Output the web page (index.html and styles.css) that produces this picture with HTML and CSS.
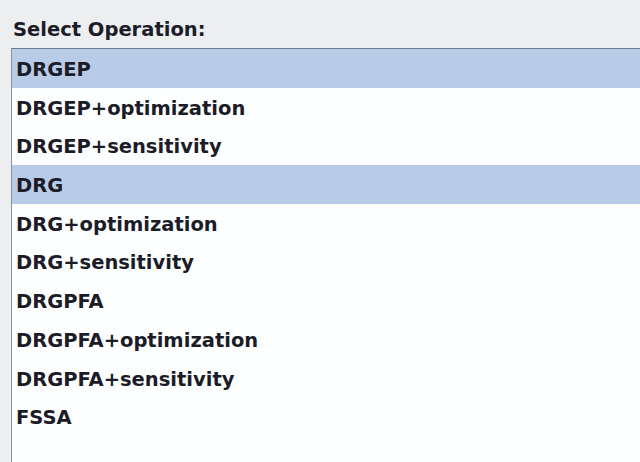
FILE: index.html
```html
<!DOCTYPE html>
<html>
<head>
<meta charset="utf-8">
<link rel="stylesheet" href="styles.css">
</head>
<body>
<div class="panel">
  <div class="label">Select Operation:</div>
  <ul class="list">
    <li class="item selected">DRGEP</li>
    <li class="item">DRGEP+optimization</li>
    <li class="item">DRGEP+sensitivity</li>
    <li class="item selected">DRG</li>
    <li class="item">DRG+optimization</li>
    <li class="item">DRG+sensitivity</li>
    <li class="item">DRGPFA</li>
    <li class="item">DRGPFA+optimization</li>
    <li class="item">DRGPFA+sensitivity</li>
    <li class="item">FSSA</li>
  </ul>
</div>
</body>
</html>
```
FILE: styles.css
```css
html, body {
  margin: 0;
  padding: 0;
  background: #eceef0;
  width: 640px;
  height: 462px;
  overflow: hidden;
}
.panel {
  display: flex;
  flex-direction: column;
  padding: 18px 0 0 11px;
  font-family: "DejaVu Sans", Verdana, sans-serif;
  font-weight: bold;
  color: #1c1c28;
}
.label {
  font-size: 19.5px;
  line-height: 24px;
  padding-left: 2px;
  margin-bottom: 6px;
}
.list {
  list-style: none;
  margin: 0;
  padding: 0;
  background: #fdfefe;
  border-top: 1px solid #6e7a8e;
  border-left: 1px solid #8a93a0;
  height: 420px;
  width: 640px;
}
.item {
  box-sizing: border-box;
  height: 38.7px;
  padding-top: 3px;
  line-height: 35.7px;
  font-size: 19.5px;
  padding-left: 4px;
  white-space: nowrap;
}
.item.selected {
  background: #b8cce8;
}
```
